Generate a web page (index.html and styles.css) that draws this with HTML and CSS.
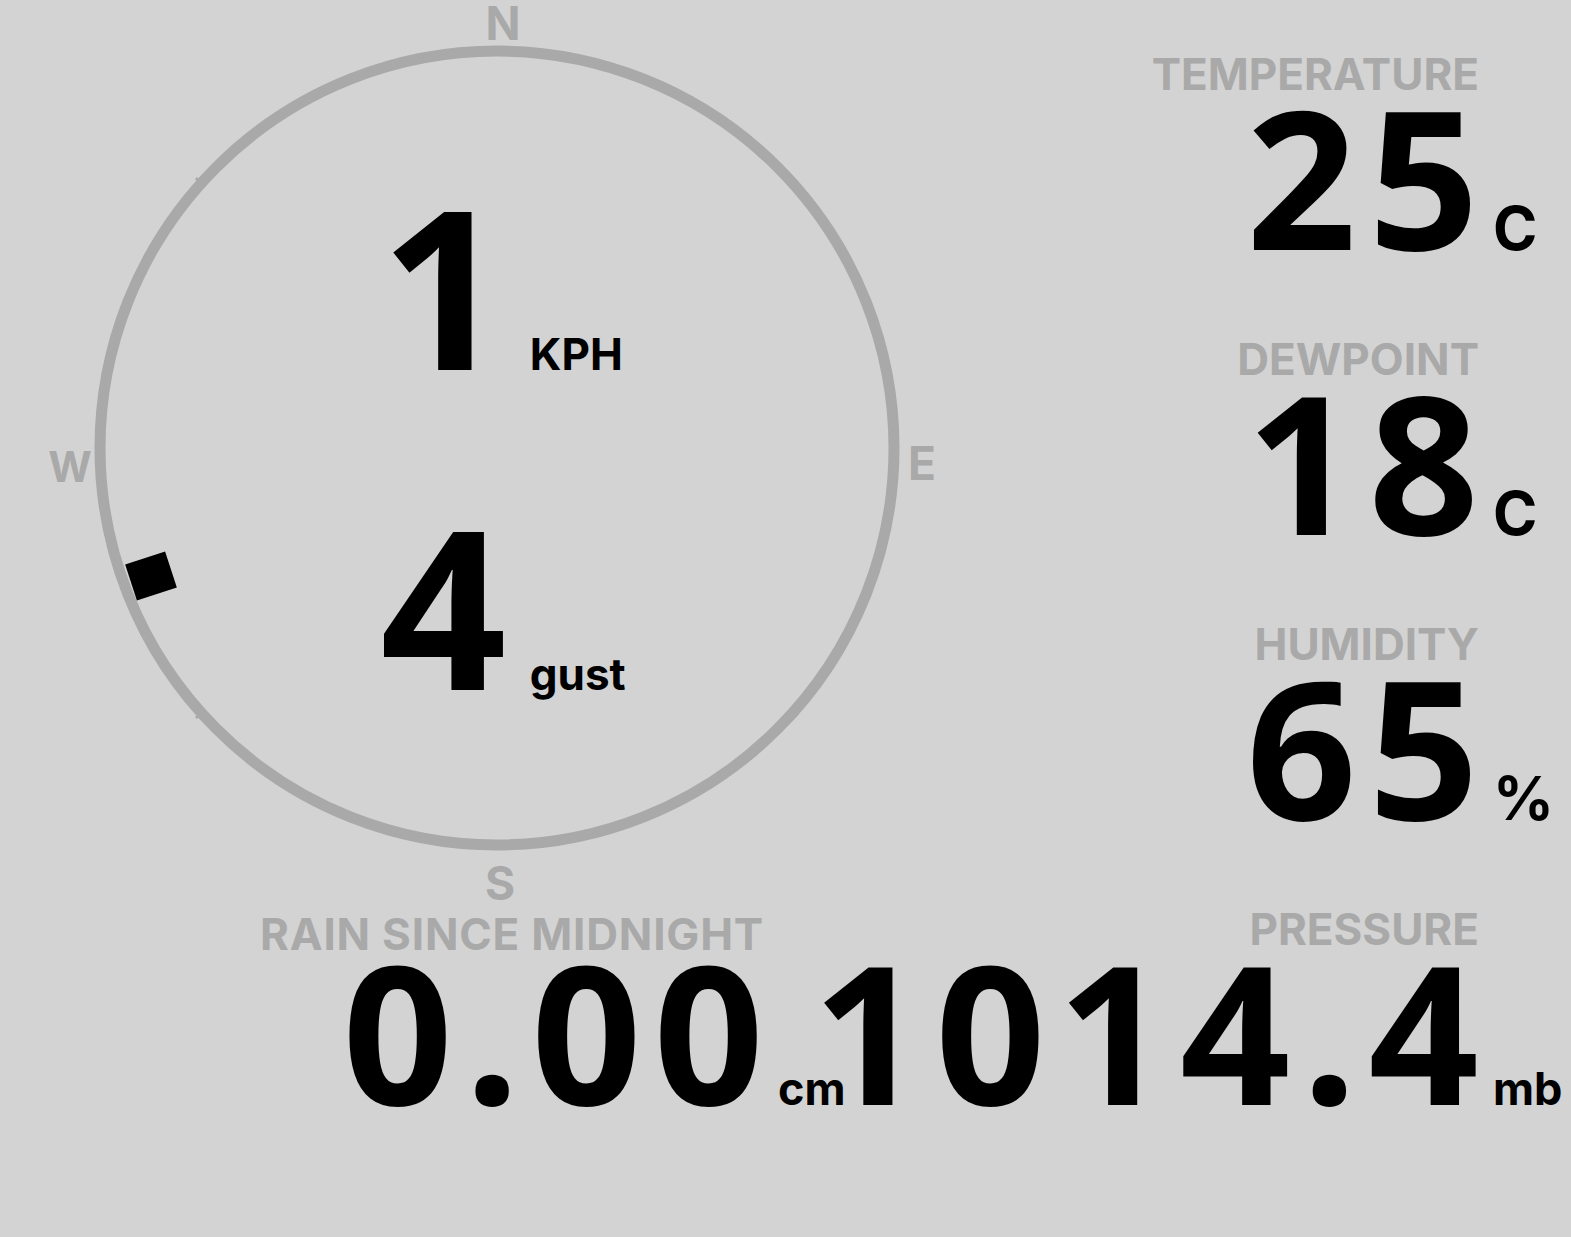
FILE: index.html
```html
<!DOCTYPE html>
<html lang="en">
<head>
<meta charset="utf-8">
<title>Weather station</title>
<link rel="stylesheet" href="styles.css">
</head>
<body>
<main class="station">
  <section class="left">
    <div class="compass">
      <svg class="dial" width="950" height="912" viewBox="0 0 950 912">
        <circle cx="497" cy="448" r="397" fill="none" stroke="#a9a9a9" stroke-width="11"/>
        <g class="notches" stroke="#a9a9a9" stroke-width="3">
          <line x1="196" y1="178" x2="204" y2="186"/>
          <line x1="790" y1="175" x2="798" y2="183"/>
          <line x1="196" y1="718" x2="204" y2="710"/>
          <line x1="790" y1="721" x2="798" y2="713"/>
        </g>
        <rect x="130" y="557" width="42" height="38" fill="#000" transform="rotate(-18 151 576)"/>
        <text x="503" y="40">N</text>
        <text x="922" y="480">E</text>
        <text x="500" y="900">S</text>
        <text class="west" x="70" y="482">W</text>
      </svg>
      <div class="wind">
        <span class="wind-value">1</span><span class="wind-unit">KPH</span>
        <span class="wind-value">4</span><span class="wind-unit">gust</span>
      </div>
    </div>
    <div class="rain-row">
      <div class="reading rain">
        <div class="label">RAIN SINCE MIDNIGHT</div>
        <div class="value">0.00</div><div class="unit small">cm</div>
      </div>
    </div>
  </section>
  <section class="right">
    <div class="reading">
      <div class="label">TEMPERATURE</div>
      <div class="value">25</div><div class="unit">C</div>
    </div>
    <div class="reading">
      <div class="label">DEWPOINT</div>
      <div class="value">18</div><div class="unit">C</div>
    </div>
    <div class="reading">
      <div class="label">HUMIDITY</div>
      <div class="value">65</div><div class="unit">%</div>
    </div>
    <div class="reading">
      <div class="label">PRESSURE</div>
      <div class="value">1014.4</div><div class="unit small">mb</div>
    </div>
  </section>
</main>
</body>
</html>
```

FILE: styles.css
```css
html, body {
  margin: 0;
  padding: 0;
}

body {
  background: #d3d3d3;
  color: #000;
  font-family: Inter, "Noto Sans", "DejaVu Sans", sans-serif;
  font-weight: 700;
  overflow: hidden;
}

.station {
  display: grid;
  grid-template-columns: minmax(0, 1fr) auto;
  width: 1571px;
  height: 1237px;
}

.left {
  display: flex;
  flex-direction: column;
}

.compass {
  position: relative;
  width: 950px;
  height: 912px;
  flex: none;
}

.dial {
  display: block;
  overflow: visible;
}

.dial text {
  font-family: Inter, "Noto Sans", sans-serif;
  font-weight: 700;
  font-size: 46px;
  fill: #a9a9a9;
  text-anchor: middle;
}

.dial text.west {
  font-size: 42px;
}

.wind {
  position: absolute;
  left: 6px;
  top: 0;
  width: 994px;
  padding-top: 183px;
  display: grid;
  grid-template-columns: auto auto;
  grid-template-rows: 203px 203px;
  justify-content: center;
  column-gap: 23px;
  row-gap: 117px;
  align-items: baseline;
}

.wind-value {
  font-family: "Noto Sans", "Open Sans", sans-serif;
  font-size: 221px;
  line-height: 203px;
  text-align: center;
}

.wind-unit {
  font-size: 44px;
  line-height: 1;
}

.rain-row {
  width: 842px;
  display: flex;
  justify-content: flex-end;
}

.right {
  display: flex;
  flex-direction: column;
  align-items: flex-end;
  padding-top: 52px;
  padding-right: 6px;
}

.reading {
  display: grid;
  grid-template-columns: auto 72px;
  grid-template-rows: 44px 140px;
  column-gap: 14px;
  row-gap: 10px;
  align-items: baseline;
  margin-bottom: 91px;
}

.reading.rain {
  grid-template-columns: auto 64px;
  column-gap: 14px;
  row-gap: 5px;
  margin-bottom: 0;
}

.label {
  grid-column: 1;
  justify-self: end;
  font-size: 44px;
  line-height: 1;
  color: #a9a9a9;
}

.rain .label {
  letter-spacing: 0.8px;
}

.value {
  grid-column: 1;
  justify-self: end;
  font-family: "Noto Sans", "Open Sans", sans-serif;
  font-size: 193px;
  line-height: 140px;
  letter-spacing: 12px;
  margin-right: -12px;
}

.unit {
  grid-column: 2;
  justify-self: start;
  font-size: 60px;
  line-height: 1;
}

.unit.small {
  font-size: 45px;
}
```
